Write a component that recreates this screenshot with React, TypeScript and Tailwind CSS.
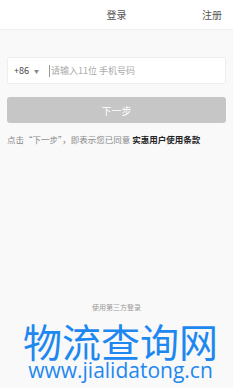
export default function App() {
  return (
    <div
      className="w-[233px] h-[388px] bg-[#f9f9f9] flex flex-col overflow-hidden"
      style={{ fontFamily: '"Noto Sans CJK SC", "Noto Sans", sans-serif' }}
    >
      <div className="h-[30px] relative flex items-center justify-center bg-white border-b border-[#f0f0f0]">
        <span className="text-[10px] text-[#555]">登录</span>
        <span className="absolute right-[11px] text-[10px] text-[#555]">注册</span>
      </div>

      <div className="px-[7px] pt-[27px]">
        <div className="h-[27px] bg-white border border-[#eeeeee] rounded-[2px] flex items-center">
          <span className="pl-[6px] text-[9px] text-[#444]">+86</span>
          <span className="ml-[5px] text-[5px] text-[#888]">▼</span>
          <span className="ml-[10px] w-px h-[12px] bg-[#999]" />
          <span className="ml-[1px] text-[9px] text-[#aaa]">请输入11位 手机号码</span>
        </div>

        <div className="mt-[13px] h-[26px] bg-[#c6c6c6] rounded-[3px] flex items-center justify-center">
          <span className="text-[10px] text-white">下一步</span>
        </div>

        <p className="mt-[12px] text-[8.5px] text-[#888] leading-none">
          点击“下一步”，即表示您已同意 <span className="text-[#222] font-bold">实惠用户使用条款</span>
        </p>
      </div>

      <div className="mt-auto flex flex-col items-center pb-[9px] pl-[8px]">
        <span className="text-[7px] leading-[9px] text-[#999] mb-[7px] -ml-[8px]">使用第三方登录</span>
        <span className="text-[39px] leading-[42px] text-[#1e88f0]">物流查询网</span>
        <span
          className="text-[21px] leading-[18px] text-[#1e88f0]"
          style={{ fontFamily: '"Open Sans", sans-serif' }}
        >
          www.jialidatong.cn
        </span>
      </div>
    </div>
  );
}
